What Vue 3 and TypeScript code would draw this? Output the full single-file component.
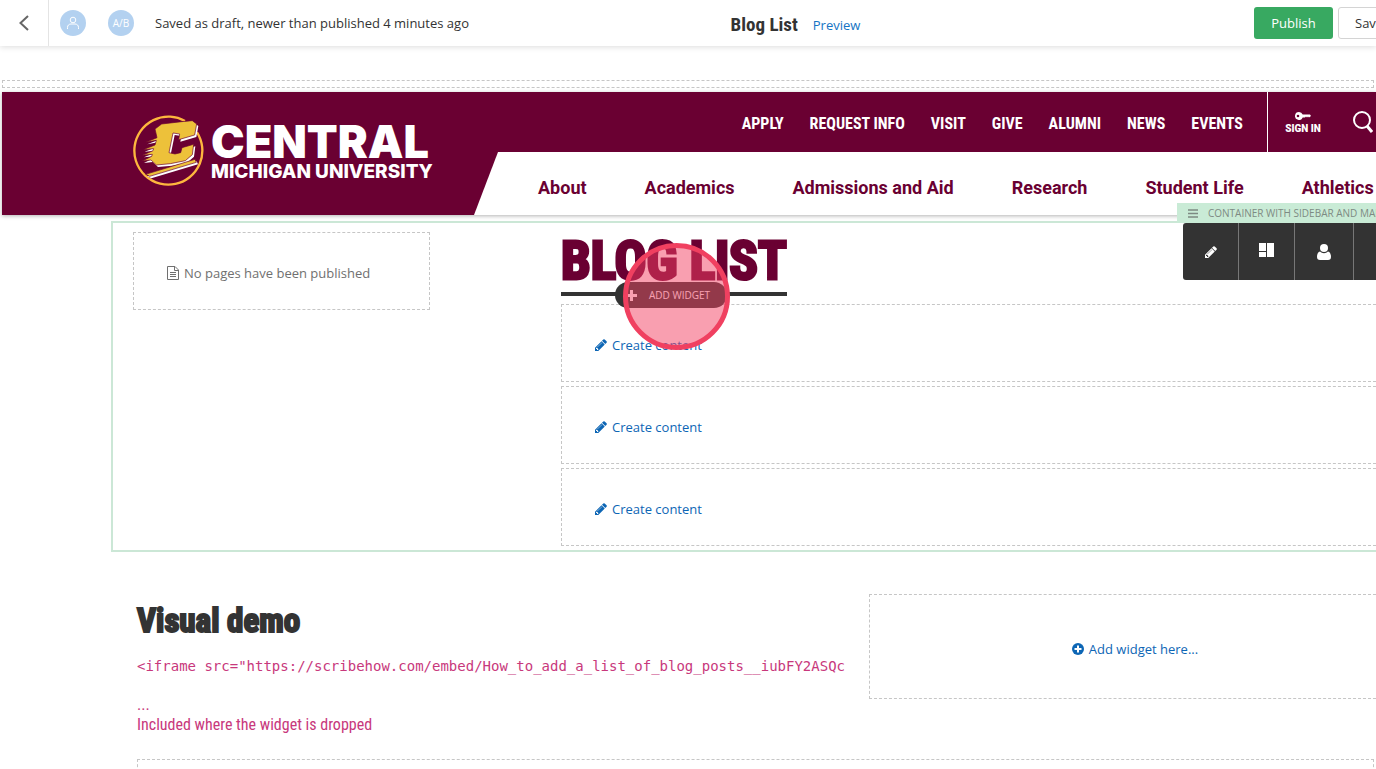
<script setup lang="ts">
import { ref } from 'vue'

const utilityLinks = ref<string[]>(['APPLY', 'REQUEST INFO', 'VISIT', 'GIVE', 'ALUMNI', 'NEWS', 'EVENTS'])
const mainLinks = ref<string[]>(['About', 'Academics', 'Admissions and Aid', 'Research', 'Student Life', 'Athletics'])
const contentSlots = ref<number[]>([1, 2, 3])

const pencil =
  'M363 1408l91-91-235-235-91 91v107h128v128h107zm523-928q0-22-22-22-10 0-17 7l-542 542q-7 7-7 17 0 22 22 22 10 0 17-7l542-542q7-7 7-17zm-54-192l416 416-832 832H0v-416zm683 96q0 53-37 90l-166 166-416-416 166-165q36-38 90-38 53 0 91 38l235 234q37 39 37 91z'
const letterC =
  'M72 48 92 33 152 26 184 23 197 33 191 66 143 80 146 63 126 60 114 119 132 123 149 119 153 104 188 94 184 125 163 143 118 152 76 156 60 141 34 144 62 130 64 124 34 127 66 113 68 107 36 110 72 96 76 82 44 88 78 74z'
const bar = 'M44 184 192 139 196 148 56 190z'
</script>

<template>
  <div class="page">
    <header class="editor-bar">
      <button class="back" type="button" aria-label="Back">
        <svg width="12" height="18" viewBox="0 0 12 18"><path d="M10 2 2.500 9l7.500 7" fill="none" stroke="#666" stroke-width="2" /></svg>
      </button>
      <button class="badge" type="button" aria-label="Audience">
        <svg width="26" height="26" viewBox="0 0 26 26" fill="none" stroke="#fff" stroke-width="1"><circle cx="13" cy="10" r="2.800" /><path d="M7.500 19v-1.500c0-2.200 1.500-3.500 3.500-3.500h4c2 0 3.500 1.300 3.500 3.500V19" /></svg>
      </button>
      <button class="badge" type="button">A/B</button>
      <span class="status">Saved as draft, newer than published 4 minutes ago</span>
      <div class="doc">
        <strong class="doc-name">Blog List</strong>
        <a class="preview" href="#">Preview</a>
      </div>
      <div class="actions">
        <button class="publish" type="button">Publish</button>
        <button class="save" type="button">Save</button>
      </div>
    </header>

    <div class="thin-zone"></div>

    <div class="site-header">
      <a class="logo" href="#">
        <svg class="emblem" viewBox="3 3 216 216">
          <path d="M162 24A102 102 0 1 0 198 58" fill="none" stroke="#fdb73e" stroke-width="7" />
          <g fill="#fff" transform="translate(5 6)"><path :d="letterC" /><path :d="bar" /></g>
          <g fill="#edc13a" stroke="#6a0032" stroke-width="2"><path :d="letterC" /><path :d="bar" /></g>
        </svg>
        <span class="wordmark">
          <span class="word-big">CENTRAL</span>
          <span class="word-small">MICHIGAN UNIVERSITY</span>
        </span>
      </a>
      <div class="navs">
        <div class="utility">
          <nav class="utility-links">
            <a v-for="l in utilityLinks" :key="l" href="#">{{ l }}</a>
          </nav>
          <div class="tools">
            <a class="sign-in" href="#">
              <svg width="16" height="8" viewBox="0 0 16 8"><path fill="#fff" fill-rule="evenodd" d="M4 0a4 4 0 1 0 3.700 5.500H10l1-1 1 1 1-1 1 1L16 4l-1-1.500H7.700A4 4 0 0 0 4 0zM3 2.700a1.300 1.300 0 1 1 0 2.600 1.300 1.300 0 0 1 0-2.600z" /></svg>
              <span>SIGN IN</span>
            </a>
            <button class="search" type="button" aria-label="Search">
              <svg width="20" height="22" viewBox="0 0 20 22" fill="none" stroke="#fff"><circle cx="9" cy="9" r="8" stroke-width="2" /><path d="m14 15 5 6" stroke-width="3" /></svg>
            </button>
          </div>
        </div>
        <nav class="main-links">
          <a v-for="l in mainLinks" :key="l" href="#">{{ l }}</a>
        </nav>
      </div>
    </div>

    <section class="container">
      <div class="container-tools">
        <div class="container-label">
          <svg width="10" height="9" viewBox="0 0 10 9"><path d="M0 1h10M0 4.500h10M0 8h10" stroke="#7d8a83" stroke-width="1.500" /></svg>
          <span>CONTAINER WITH SIDEBAR AND MAIN</span>
        </div>
        <div class="toolbar">
          <button type="button" aria-label="Edit">
            <svg width="12" height="12" viewBox="0 0 1536 1536"><path fill="#fff" :d="pencil" /></svg>
          </button>
          <button type="button" aria-label="Layout">
            <svg width="15" height="18" viewBox="0 0 15 18" fill="#fff"><path d="M0 0h7v8H0zM0 9h7v5H0zM8 0h7v14H8z" /></svg>
          </button>
          <button type="button" aria-label="Person">
            <svg width="14" height="16" viewBox="0 0 14 16" fill="#fff"><circle cx="7" cy="4" r="4" /><path d="M3 7.500a5.600 5.600 0 0 0 8 0c2 .5 3 2.800 3 5.300C14 15 13 16 11 16H3c-2 0-3-1-3-3.200 0-2.500 1-4.800 3-5.300z" /></svg>
          </button>
          <button type="button" aria-label="More"></button>
        </div>
      </div>
      <aside class="sidebar">
        <svg width="12" height="14" viewBox="0 0 12 14" fill="none" stroke="#707070"><path d="M.5.5h7.500l3.500 3.500v9.500H.5zM7.500.5v4h4M3 6.500h6M3 8.500h6M3 10.500h6" /></svg>
        <span>No pages have been published</span>
      </aside>
      <main class="main">
        <div class="title-wrap">
          <h1>BLOG LIST</h1>
          <button class="add-widget" type="button">
            <svg width="11" height="11" viewBox="0 0 11 11"><path d="M5.500 0v11M0 5.500h11" stroke="#fff" stroke-width="3" /></svg>
            ADD WIDGET
          </button>
          <span class="click-marker"></span>
        </div>
        <div v-for="n in contentSlots" :key="n" class="slot">
          <a href="#">
            <svg width="12" height="12" viewBox="0 0 1536 1536"><path fill="#0d66b5" :d="pencil" /></svg>
            Create content
          </a>
        </div>
      </main>
    </section>

    <section class="lower">
      <article class="demo">
        <h2>Visual demo</h2>
        <pre>&lt;iframe src="https://scribehow.com/embed/How_to_add_a_list_of_blog_posts__iubFY2ASQc</pre>
        <p>...</p>
        <p>Included where the widget is dropped</p>
      </article>
      <div class="drop-zone">
        <a href="#">
          <svg width="12" height="12" viewBox="0 0 12 12"><circle cx="6" cy="6" r="6" fill="#0d66b5" /><path d="M6 2.500v7M2.500 6h7" stroke="#fff" stroke-width="2" /></svg>
          Add widget here...
        </a>
      </div>
    </section>
    <div class="bottom-zone"></div>
  </div>
</template>

<style>
body { margin: 0; background: #fff; overflow: hidden; }
</style>

<style scoped>
.page { font-family: "Open Sans", "Noto Sans", sans-serif; font-size: 13px; color: #333; overflow: hidden; height: 100vh; }
.page * { box-sizing: border-box; }
a { text-decoration: none; color: #0d66b5; white-space: nowrap; }
button { font: inherit; border: 0; padding: 0; background: none; color: inherit; cursor: pointer; }
svg { flex: none; display: block; }

.editor-bar { position: relative; height: 46px; display: flex; align-items: center; box-shadow: 0 1px 6px rgba(0, 0, 0, 0.14); }
.back { width: 49px; height: 46px; border-right: 1px solid #e4e4e4; display: flex; align-items: center; justify-content: center; }
.badge { width: 26px; height: 26px; border-radius: 50%; background: #b3d1f0; color: #fff; font-size: 10px; margin-left: 11px; }
.badge + .badge { margin-left: 22px; }
.status { margin-left: 21px; white-space: nowrap; }
.doc { flex: 1; display: flex; align-items: center; justify-content: center; gap: 15px; padding: 2px 132px 0 0; }
.doc-name { font: 700 19px "Roboto Condensed", "Open Sans", sans-serif; white-space: nowrap; }
.preview { padding-top: 2px; color: #1474c4; }
.actions { display: flex; gap: 5px; margin-right: -24px; }
.actions button { height: 32px; border-radius: 3px; padding: 0 16px; }
.publish { width: 79px; background: #38a961; color: #fff; }
.actions .save { width: 62px; border: 1px solid #d4d4d4; }

.thin-zone { height: 8px; margin: 34px 2px 0; border: 1px dashed #c6c6c6; }

.site-header { margin: 4px 0 0 2px; background: #6a0032; display: flex; box-shadow: 0 1px 4px rgba(0, 0, 0, 0.3); }
.logo { display: flex; align-items: flex-start; gap: 7px; padding: 22px 0 0 130px; width: 472px; flex: none; }
.emblem { width: 72px; height: 72px; }
.wordmark { display: flex; flex-direction: column; color: #fff; padding-top: 8px; }
.word-big { font: 900 45px/40px Inter, sans-serif; }
.word-small { font: 800 19px/20px Inter, sans-serif; }
.navs { flex: 1; min-width: 0; }
.utility { height: 60px; display: flex; justify-content: flex-end; }
.utility-links { display: flex; align-items: center; gap: 26px; padding: 2px 24px 0 0; }
.utility-links a { font: 700 16px "Roboto Condensed", sans-serif; color: #fff; }
.tools { width: 109px; border-left: 1px solid #fff; display: flex; align-items: center; padding-left: 17px; }
.sign-in { display: flex; flex-direction: column; align-items: center; gap: 3px; color: #fff; font: 900 10px/12px Roboto, sans-serif; width: 36px; padding-top: 2px; }
.search { margin-left: 32px; }
.main-links { height: 63px; background: #fff; clip-path: polygon(24px 0, 100% 0, 100% 100%, 0 100%); display: flex; align-items: center; gap: 58px; padding: 8px 0 0 64px; overflow: hidden; }
.main-links a { font: 700 18px Roboto, sans-serif; color: #6a0032; }

.container { position: relative; margin: 6px 0 0 111px; border: 2px solid #cbe7d6; border-right: 0; padding: 9px 0 4px 20px; display: grid; grid-template-columns: 297px minmax(0, 1fr); column-gap: 131px; align-items: start; }
.container-tools { position: absolute; right: 0; top: -20px; width: 199px; overflow: hidden; z-index: 2; }
.container-label { height: 20px; background: #c9ebd6; display: flex; align-items: center; gap: 10px; padding-left: 11px; font-size: 10px; color: #7d8a83; white-space: nowrap; }
.toolbar { display: flex; margin-left: 6px; background: #333; border-radius: 3px 0 0 3px; height: 57px; }
.toolbar button { flex: none; width: 56px; border-right: 1px solid #777; display: flex; align-items: center; justify-content: center; }
.toolbar button:nth-child(3) { width: 59px; }
.sidebar { height: 78px; border: 1px dashed #c6c6c6; padding-left: 33px; padding-top: 3px; display: flex; align-items: center; gap: 5px; color: #707070; }
.main { display: flex; flex-direction: column; gap: 4px; }
.title-wrap { position: relative; align-self: flex-start; height: 68px; }
h1 { margin: 0; height: 64px; border-bottom: 4px solid #333; font: 700 53px/58px "Roboto Condensed", sans-serif; -webkit-text-stroke: 3px #6a0032; color: #6a0032; white-space: nowrap; }
.add-widget { position: absolute; left: 54px; top: 50px; width: 112px; height: 26px; border-radius: 13px; background: #333; color: #fff; font-size: 10px; display: flex; align-items: center; gap: 12px; padding-left: 11px; z-index: 2; }
.click-marker { position: absolute; left: 62px; top: 11px; width: 107px; height: 107px; border-radius: 50%; border: 5px solid #f04060; background: rgba(244, 64, 98, 0.5); z-index: 3; pointer-events: none; }
.slot { height: 78px; border: 1px dashed #c6c6c6; border-right: 0; padding: 4px 0 0 33px; display: flex; align-items: center; }
.slot a, .drop-zone a { display: flex; align-items: center; gap: 5px; }

.lower { margin: 42px 0 0 137px; display: grid; grid-template-columns: 720px minmax(0, 1fr); column-gap: 12px; align-items: start; }
.demo { min-width: 0; color: #c8387c; }
h2 { margin: 0; padding-top: 6px; font: 700 33px/42px "Roboto Condensed", sans-serif; -webkit-text-stroke: 2px #333; color: #333; }
pre { margin: 14px 0 19px; font: 14px/20px "DejaVu Sans Mono", monospace; overflow: hidden; }
p { margin: 0; font: 16px/20px "Roboto Condensed", Roboto, sans-serif; }
.drop-zone { height: 105px; border: 1px dashed #c6c6c6; border-right: 0; padding-top: 4px; padding-left: 24px; display: flex; align-items: center; justify-content: center; }
.bottom-zone { margin: 24px 2px 0 137px; height: 60px; border: 1px dashed #c6c6c6; }
</style>
